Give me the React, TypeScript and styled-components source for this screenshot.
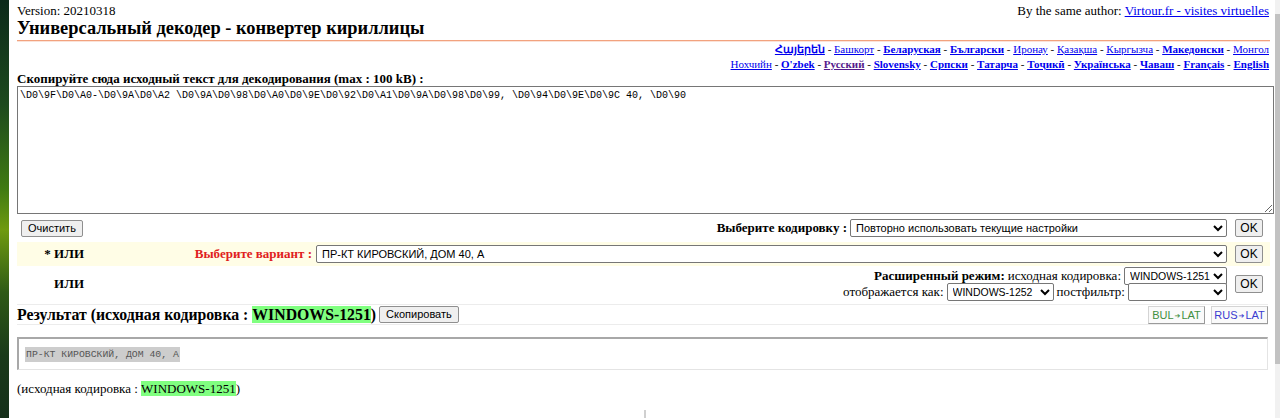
import React from "react";
import styled, { createGlobalStyle } from "styled-components";

const Global = createGlobalStyle`
  html, body { margin: 0; padding: 0; background: #fff; }
  body { font-family: "Liberation Serif", "Times New Roman", serif; font-size: 13px; color: #000; overflow: hidden; }
`;

const Screen = styled.div`
  display: flex;
  width: 1280px;
  height: 418px;
  overflow: hidden;
`;

const DesktopEdge = styled.div`
  flex: 0 0 9px;
  height: 418px;
  background: linear-gradient(180deg, #0c2a1a 0%, #1d4a1e 25%, #3f7a12 45%, #6f9a10 55%, #2e5a16 70%, #1a3a1a 85%, #16301a 100%);
`;

const Main = styled.div`
  flex: 1;
  padding: 3px 3px 0 8px;
  min-width: 0;
`;

const Scrollbar = styled.div`
  flex: 0 0 5px;
  height: 418px;
  background: #f1f1f1;
  display: flex;
  flex-direction: column;
  padding-top: 14px;
`;

const Thumb = styled.div`
  height: 350px;
  background: #c2c2c2;
`;

const TopBar = styled.div`
  display: flex;
  justify-content: space-between;
  align-items: baseline;
  line-height: 15px;
  padding-right: 3px;
`;

const Link = styled.a<{ $bold?: boolean; $visited?: boolean }>`
  color: ${(p) => (p.$visited ? "#551a8b" : "#0000ee")};
  text-decoration: underline;
  font-weight: ${(p) => (p.$bold ? "bold" : "normal")};
`;

const Title = styled.h1`
  margin: 0 2px 0 0;
  font-size: 18.4px;
  font-weight: bold;
  line-height: 21px;
  padding-bottom: 1px;
  border-bottom: 1px solid #f2a27e;
  box-shadow: 0 1px 0 #fbe3d8;
`;

const Langs = styled.div`
  text-align: right;
  font-size: 11px;
  margin-top: 1px;
  padding-right: 3px;
`;

const LangRow = styled.div`
  height: 15px;
  line-height: 15px;
  white-space: nowrap;
`;

const Label = styled.div`
  font-weight: bold;
  height: 14px;
  line-height: 14px;
`;

const Source = styled.textarea`
  display: block;
  box-sizing: border-box;
  width: 1257px;
  height: 128px;
  margin: 0;
  padding: 2px 2px;
  border: 1px solid #767676;
  font-family: "Liberation Mono", monospace;
  font-size: 10px;
  line-height: 13px;
  color: #000;
  resize: both;
  outline: none;
`;

const FormRow = styled.div<{ $tint?: boolean; $h: number }>`
  display: grid;
  grid-template-columns: 67px 1fr 43px;
  align-items: center;
  height: ${(p) => p.$h}px;
  background: ${(p) => (p.$tint ? "#fffde6" : "transparent")};
  margin-right: 2px;
`;

const LeftCell = styled.div<{ $right?: boolean }>`
  text-align: ${(p) => (p.$right ? "right" : "left")};
  font-weight: bold;
  padding-left: ${(p) => (p.$right ? 0 : 4)}px;
`;

const MidCell = styled.div`
  display: flex;
  justify-content: flex-end;
  align-items: center;
  min-width: 0;
`;

const OkCell = styled.div`
  display: flex;
  justify-content: flex-start;
  padding-left: 8px;
`;

const Btn = styled.button`
  font-family: "Liberation Sans", Arial, sans-serif;
  font-size: 11px;
  height: 17px;
  line-height: 13px;
  padding: 0 6px;
  background: #efefef;
  border: 1px solid #8f8f8f;
  border-radius: 2px;
  color: #000;
`;

const Ok = styled(Btn)`
  width: 28px;
  padding: 0;
  font-size: 12px;
  height: 18px;
`;

const Select = styled.select<{ $w?: number; $fs?: number }>`
  font-family: "Liberation Sans", Arial, sans-serif;
  font-size: ${(p) => p.$fs ?? 11}px;
  height: 18px;
  box-sizing: border-box;
  width: ${(p) => (p.$w ? `${p.$w}px` : "auto")};
  flex: ${(p) => (p.$w ? "0 0 auto" : "1")};
  border: 1px solid #767676;
  border-radius: 2px;
  background: #fff;
  color: #000;
  padding: 0 0 0 1px;
  margin: 0;
`;

const BoldLabel = styled.span`
  font-weight: bold;
  margin-right: 3px;
  white-space: nowrap;
`;

const VariantLabel = styled.div`
  flex: 0 0 232px;
  text-align: right;
  font-weight: bold;
  color: #e02020;
  padding-right: 4px;
  box-sizing: border-box;
`;

const Extended = styled.div`
  display: flex;
  flex-direction: column;
  align-items: flex-end;
`;

const ExtLine = styled.div`
  display: flex;
  align-items: center;
  gap: 3px;
  height: 16px;
  white-space: nowrap;
`;

const ResultHead = styled.div`
  display: flex;
  align-items: center;
  justify-content: space-between;
  height: 19px;
  border-top: 1px solid #ececec;
  border-bottom: 1px solid #ececec;
  margin-top: 2px;
  margin-right: 4px;
`;

const HeadText = styled.div`
  display: flex;
  align-items: center;
  gap: 3px;
  font-size: 15.8px;
  font-weight: bold;
`;

const Hl = styled.span`
  background: #80ff80;
`;

const Translit = styled.div`
  display: flex;
  gap: 6px;
`;

const TrBtn = styled.button<{ $c: string }>`
  font-family: "Liberation Sans", Arial, sans-serif;
  font-size: 11px;
  height: 18px;
  width: 57px;
  padding: 0;
  background: #fafafa;
  border: 1px solid #d4d4d4;
  border-right-color: #9a9a9a;
  border-bottom-color: #9a9a9a;
  color: ${(p) => p.$c};
`;

const Arrow = styled.span`
  font-family: "DejaVu Sans", sans-serif;
  font-size: 7px;
  margin: 0 1px;
  vertical-align: 1px;
`;

const ResultBox = styled.div`
  box-sizing: border-box;
  width: 1251px;
  height: 33px;
  margin-top: 12px;
  border-top: 2px solid #a8a8a8;
  border-left: 2px solid #a8a8a8;
  border-right: 1px solid #e4e4e4;
  border-bottom: 1px solid #e4e4e4;
  display: flex;
  align-items: center;
  padding-left: 6px;
`;

const Mono = styled.span`
  font-family: "Liberation Mono", monospace;
  font-size: 9.8px;
  line-height: 15px;
  background: #cdcdcd;
  color: #555;
  padding: 0 1px;
`;

const Footer = styled.div`
  margin-top: 11px;
  line-height: 15px;
`;

const Tick = styled.div`
  width: 2px;
  height: 10px;
  background: #d0d0d0;
  margin: 14px 0 0 627px;
`;

const langs1: [string, boolean, boolean?][] = [
  ["Հայերեն", true],
  ["Башкорт", false],
  ["Беларуская", true],
  ["Български", true],
  ["Иронау", false],
  ["Қазақша", false],
  ["Кыргызча", false],
  ["Македонски", true],
  ["Монгол", false],
];
const langs2: [string, boolean, boolean?][] = [
  ["Нохчийн", false],
  ["O'zbek", true],
  ["Русский", true, true],
  ["Slovensky", true],
  ["Српски", true],
  ["Татарча", true],
  ["Тоҷикӣ", true],
  ["Українська", true],
  ["Чаваш", true],
  ["Français", true],
  ["English", true],
];

const LangLine = ({ items }: { items: [string, boolean, boolean?][] }) => (
  <LangRow>
    {items.map(([n, b, v], i) => (
      <React.Fragment key={n}>
        {i > 0 && " - "}
        <Link href="#" $bold={b} $visited={v}>
          {n}
        </Link>
      </React.Fragment>
    ))}
  </LangRow>
);

const src =
  "\\D0\\9F\\D0\\A0-\\D0\\9A\\D0\\A2 \\D0\\9A\\D0\\98\\D0\\A0\\D0\\9E\\D0\\92\\D0\\A1\\D0\\9A\\D0\\98\\D0\\99, \\D0\\94\\D0\\9E\\D0\\9C 40, \\D0\\90";

export default function App() {
  return (
    <>
      <Global />
      <Screen>
        <DesktopEdge />
        <Main>
          <TopBar>
            <span>Version: 20210318</span>
            <span>
              By the same author: <Link href="#">Virtour.fr - visites virtuelles</Link>
            </span>
          </TopBar>
          <Title>Универсальный декодер - конвертер кириллицы</Title>
          <Langs>
            <LangLine items={langs1} />
            <LangLine items={langs2} />
          </Langs>
          <Label>Скопируйте сюда исходный текст для декодирования (max : 100 kB) :</Label>
          <Source defaultValue={src} spellCheck={false} />
          <FormRow $h={28}>
            <LeftCell>
              <Btn>Очистить</Btn>
            </LeftCell>
            <MidCell>
              <BoldLabel>Выберите кодировку :</BoldLabel>
              <Select $w={377}>
                <option>Повторно использовать текущие настройки</option>
              </Select>
            </MidCell>
            <OkCell>
              <Ok>OK</Ok>
            </OkCell>
          </FormRow>
          <FormRow $h={24} $tint>
            <LeftCell $right>* ИЛИ</LeftCell>
            <MidCell>
              <VariantLabel>Выберите вариант :</VariantLabel>
              <Select>
                <option>ПР-КТ КИРОВСКИЙ, ДОМ 40, А</option>
              </Select>
            </MidCell>
            <OkCell>
              <Ok>OK</Ok>
            </OkCell>
          </FormRow>
          <FormRow $h={36}>
            <LeftCell $right>ИЛИ</LeftCell>
            <MidCell>
              <Extended>
                <ExtLine>
                  <b>Расширенный режим:</b> исходная кодировка:
                  <Select $w={103} $fs={10.5}>
                    <option>WINDOWS-1251</option>
                  </Select>
                </ExtLine>
                <ExtLine>
                  отображается как:
                  <Select $w={107} $fs={10.5}>
                    <option>WINDOWS-1252</option>
                  </Select>
                  <span>постфильтр:</span>
                  <Select $w={99}>
                    <option></option>
                  </Select>
                </ExtLine>
              </Extended>
            </MidCell>
            <OkCell>
              <Ok>OK</Ok>
            </OkCell>
          </FormRow>
          <ResultHead>
            <HeadText>
              <span>
                Результат (исходная кодировка : <Hl>WINDOWS-1251</Hl>)
              </span>
              <Btn>Скопировать</Btn>
            </HeadText>
            <Translit>
              <TrBtn $c="#3f8f3f">
                BUL<Arrow>➔</Arrow>LAT
              </TrBtn>
              <TrBtn $c="#3b3bd0">
                RUS<Arrow>➔</Arrow>LAT
              </TrBtn>
            </Translit>
          </ResultHead>
          <ResultBox>
            <Mono>ПР-КТ КИРОВСКИЙ, ДОМ 40, А</Mono>
          </ResultBox>
          <Footer>
            (исходная кодировка : <Hl>WINDOWS-1251</Hl>)
          </Footer>
          <Tick />
        </Main>
        <Scrollbar>
          <Thumb />
        </Scrollbar>
      </Screen>
    </>
  );
}
